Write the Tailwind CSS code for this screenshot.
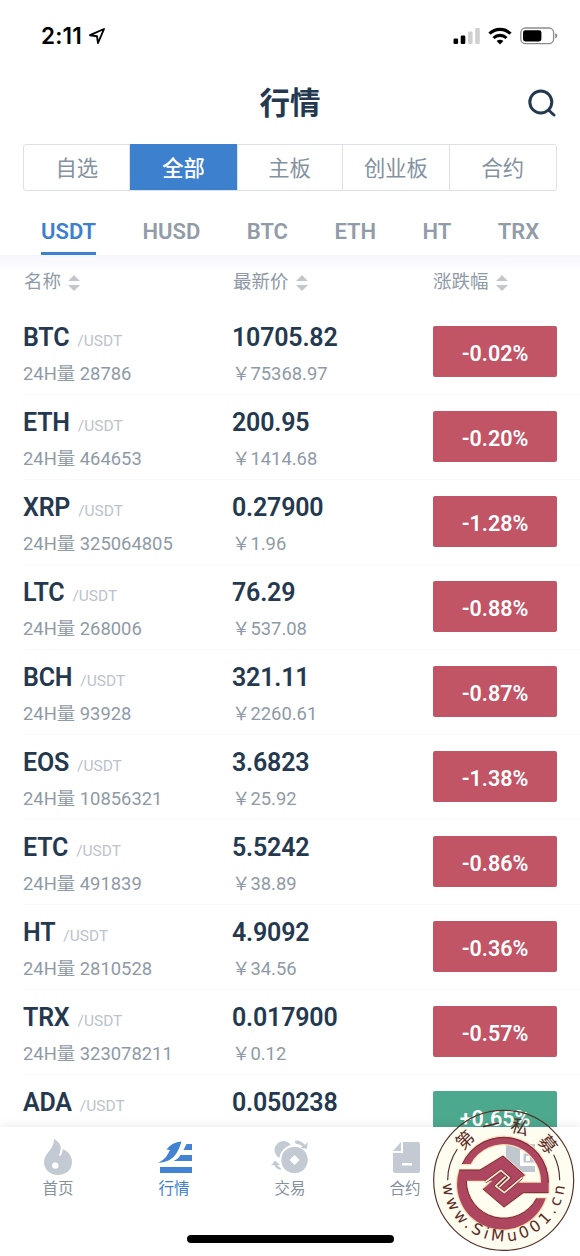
<!DOCTYPE html>
<html lang="zh-CN">
<head>
    <meta charset="UTF-8">
    <meta name="viewport" content="width=device-width, initial-scale=1.0">
    <title>行情</title>
    <script src="https://cdn.jsdelivr.net/npm/@tailwindcss/browser@4"></script>
</head>
<body class="bg-white font-['Roboto','Noto_Sans_CJK_SC',sans-serif]">
<div class="relative flex h-[1256px] w-[580px] flex-col overflow-hidden bg-white">
    <!-- status bar -->
    <div class="flex h-[70px] shrink-0 items-center pt-[2px] pr-[22px] pl-[41px]">
        <span class="font-['Inter',sans-serif] text-[22.5px] font-semibold tracking-[0.2px] text-black">2:11</span>
        <svg class="mt-[-1px] ml-[6px]" width="18" height="18" viewBox="0 0 18 18" fill="none" stroke="#000" stroke-width="1.9" stroke-linejoin="round"><path d="M2 8.2 16 2 10 16 9 9.2Z"/></svg>
        <div class="ml-auto flex items-center">
            <svg width="28" height="18" viewBox="0 0 28 18">
                <rect x="0.5" y="11.5" width="4.6" height="5.5" rx="1.3"/>
                <rect x="7.7" y="8.5" width="4.6" height="8.5" rx="1.3"/>
                <rect x="15" y="4.5" width="4.6" height="12.5" rx="1.3" fill="#d0d0d0"/>
                <rect x="22.2" y="1" width="4.6" height="16" rx="1.3" fill="#d0d0d0"/>
            </svg>
            <svg class="ml-[7px]" width="24" height="18" viewBox="0 0 24 18" fill="none" stroke="#000" stroke-width="3.1">
                <path d="M1.5 6.7a15 15 0 0 1 21 0M5.5 11a9.3 9.3 0 0 1 13 0"/>
                <path d="M8.6 14a4.9 4.9 0 0 1 6.8 0L12 17.4Z" fill="#000" stroke="none"/>
            </svg>
            <svg class="ml-[8px]" width="38" height="18" viewBox="0 0 38 18">
                <rect x="0.8" y="1" width="32.8" height="15.6" rx="4.6" fill="none" stroke="#8c8c8c" stroke-width="1.3"/>
                <rect x="3" y="3.2" width="18.4" height="11.2" rx="2.4"/>
                <path d="M35.2 6v5.6q2.2-1 2.2-2.8t-2.2-2.8" fill="#8c8c8c"/>
            </svg>
        </div>
    </div>

    <!-- title -->
    <div class="relative flex h-[74px] shrink-0 justify-center pt-[12px]">
        <h1 class="text-[30.5px] leading-[44px] font-bold text-[#24394f]">行情</h1>
        <svg class="absolute top-[18px] right-[22px]" width="30" height="30" viewBox="0 0 30 30" fill="none" stroke="#24394f" stroke-width="3" stroke-linecap="round"><circle cx="12.8" cy="14" r="11"/><path d="m21 22.5 5 4.5"/></svg>
    </div>

    <!-- board switch -->
    <div class="mx-[23px] grid h-[47px] shrink-0 grid-cols-5 grid-rows-[45px] divide-x divide-[#dde1e6] rounded-[3px] border border-[#dde1e6] text-center text-[21.3px] leading-[48px] text-[#84919f]">
        <span>自选</span>
        <span class="-mt-px -mr-px h-[46px] bg-[#3d80cd] leading-[50px] font-medium text-white">全部</span>
        <span>主板</span>
        <span>创业板</span>
        <span>合约</span>
    </div>

    <!-- quote currency -->
    <div class="flex h-[64px] shrink-0 gap-[46.4px] pl-[41px] text-[22px] leading-[81px] font-semibold text-[#919ca8]">
        <span class="border-b-[3px] border-[#3d80cd] text-[#3d80cd]">USDT</span>
        <span>HUSD</span>
        <span>BTC</span>
        <span>ETH</span>
        <span>HT</span>
        <span>TRX</span>
    </div>

    <!-- column heads -->
    <div class="flex h-[55px] shrink-0 bg-linear-to-b from-[#f5f5fc] to-white to-30% pl-[24px] text-[18.5px] leading-[55px] text-[#8f9aa7]">
        <div class="flex w-[209px] items-center">名称
            <svg class="ml-[7px]" width="12" height="16" viewBox="0 0 12 16" fill="#c3c8cd"><path d="M6 0 12 6H0ZM6 16 0 10h12Z"/></svg>
        </div>
        <div class="flex w-[200px] items-center">最新价
            <svg class="ml-[7px]" width="12" height="16" viewBox="0 0 12 16" fill="#c3c8cd"><path d="M6 0 12 6H0ZM6 16 0 10h12Z"/></svg>
        </div>
        <div class="flex items-center">涨跌幅
            <svg class="ml-[7px]" width="12" height="16" viewBox="0 0 12 16" fill="#c3c8cd"><path d="M6 0 12 6H0ZM6 16 0 10h12Z"/></svg>
        </div>
    </div>

    <div id="coin_list" class="min-h-0 flex-1 overflow-hidden"></div>

    <!-- bottom tabs -->
    <nav class="relative flex h-[129px] shrink-0 bg-white pt-[11px] text-center text-[15.5px] text-[#84919f] shadow-[0_-1px_9px_rgba(0,0,0,0.09)]">
        <div class="flex w-[116px] flex-col items-center">
            <svg width="40" height="40" viewBox="0 0 40 40" fill="#c3cad3"><path fill-rule="evenodd" d="M16 1C23 5 24 9 21.5 16C20.5 20 24.5 18 24.7 11C30 13 34 18 34 24C34 32 28 37 20 37C12 37 6 31.5 6 24C6 15 16 12 16 1ZM17.3 24.2a3.3 3.3 0 1 0 .01 0Z"/></svg>
            <span class="mt-[-1px] leading-[24px]">首页</span>
        </div>
        <div class="flex w-[116px] flex-col items-center text-[#3d80cd]">
            <svg width="40" height="40" viewBox="0 0 40 40" fill="#4283d3"><path d="M6 29h32v6H6ZM4 24.500C11 22 13.500 17 16 12L12.500 11.500Q18 4 27.500 3.500C24.500 13 20 25 4 24.500ZM32.500 6H38v6H29.500ZM26.500 17H38v6H19.500C23 21.500 25 19.500 26.500 17Z"/></svg>
            <span class="mt-[-1px] leading-[24px]">行情</span>
        </div>
        <div class="flex w-[116px] flex-col items-center">
            <svg width="40" height="40" viewBox="0 0 40 40" fill="#c3cad3">
                <circle cx="13.500" cy="12" r="9"/>
                <circle cx="24.500" cy="22" r="15.300" fill="#fff"/>
                <path fill-rule="evenodd" d="M24.500 8.700a13.300 13.300 0 1 0 .01 0ZM24.500 17l5 5-5 5-5-5Z"/>
                <path d="M25 2.500Q31 2 35 7L37.800 4 37 10.800 30.500 10 32.500 8.300Q29.500 5.500 25.500 5.800ZM10.500 32Q6 31 4.300 27L1 27.500 5 22.500 10 27 7.300 27.300Q9 29.300 11 30Z"/>
            </svg>
            <span class="mt-[-1px] leading-[24px]">交易</span>
        </div>
        <div class="flex w-[114px] flex-col items-center">
            <svg width="40" height="40" viewBox="0 0 40 40" fill="#c3cad3"><path fill-rule="evenodd" d="M18 4H33q2 0 2 2V33q0 2-2 2H10q-2 0-2-2V15H18ZM17 25v2.500H27V25ZM16 4V13H8Z"/></svg>
            <span class="mt-[-1px] leading-[24px]">合约</span>
        </div>
        <div class="flex w-[118px] flex-col items-center">
            <svg width="40" height="40" viewBox="0 0 40 40" fill="#a9b4c4"><path fill-rule="evenodd" d="M5 6H34V34H15C9 34 5 30 5 25ZM19 12V28H34V24.500H22.500V15.500H34V12ZM25 18h4v5h-4Z"/></svg>
        </div>
        <div class="absolute bottom-[13px] left-[187px] h-[8px] w-[207px] rounded-full bg-black"></div>
    </nav>

    <!-- round stamp over the corner -->
    <svg class="absolute top-[1109px] left-[432px]" width="143" height="143" viewBox="36 57 429 429">
        <defs>
            <path id="ring_text" d="M67 270A184 184 0 0 0 435 270"/>
            <mask id="disc">
                <rect x="36" y="57" width="429" height="429" fill="#fff"/>
                <path d="M252 160H348V250H252Z" fill="#444"/>
                <path d="M36 57H465V114H36Z" fill="#000"/>
            </mask>
        </defs>
        <circle cx="251" cy="271" r="210" fill="#fffdf0" mask="url(#disc)"/>
        <circle cx="251" cy="271" r="210" fill="none" stroke="#54312b" stroke-width="3.5"/>
        <path d="M83 271A168 168 0 0 1 112 177M419 271A168 168 0 0 0 401 194" fill="none" stroke="#54312b" stroke-width="3.5"/>
        <g fill="#ae4660" stroke="#f6dfb3" stroke-width="7" paint-order="stroke">
            <path d="M127 222A135 135 0 0 1 386 278V308H310L252 351 189 297 217 272H139A112 112 0 0 0 350 325H377A135 135 0 0 1 118 240H180L249 198 314 256 290 278H363A112 112 0 0 0 152 222Z"/>
        </g>
        <path d="M127 222A135 135 0 0 1 385 278M118 240H180L249 198 314 256M139 272A112 112 0 0 0 350 325M189 297 252 351 310 308H385" fill="none" stroke="#732a3d" stroke-width="3"/>
        <path d="M196 276 243 241 268 263 238 291M306 263 253 308 227 288 257 260" fill="none" stroke="#6d2638" stroke-width="9"/>
        <path d="M196 276 243 241 268 263 238 291M306 263 253 308 227 288 257 260" fill="none" stroke="#fbecc8" stroke-width="5"/>
        <g fill="#5b2a25" font-family="'Noto Sans CJK SC', sans-serif" font-size="54" text-anchor="middle">
            <text transform="translate(135 150) rotate(-44)" y="19">第</text>
            <text transform="translate(213 107) rotate(-13)" y="19">一</text>
            <text transform="translate(300 112) rotate(17)" y="19">私</text>
            <text transform="translate(383 163) rotate(51)" y="19">募</text>
        </g>
        <text fill="#5b2a25" font-family="'DejaVu Sans', sans-serif" font-size="47"><textPath href="#ring_text" startOffset="12" textLength="548">www.SiMu001.cn</textPath></text>
    </svg>
</div>

<script>
    const coins = [
        ['BTC', '28786', '10705.82', '75368.97', '-0.02%'],
        ['ETH', '464653', '200.95', '1414.68', '-0.20%'],
        ['XRP', '325064805', '0.27900', '1.96', '-1.28%'],
        ['LTC', '268006', '76.29', '537.08', '-0.88%'],
        ['BCH', '93928', '321.11', '2260.61', '-0.87%'],
        ['EOS', '10856321', '3.6823', '25.92', '-1.38%'],
        ['ETC', '491839', '5.5242', '38.89', '-0.86%'],
        ['HT', '2810528', '4.9092', '34.56', '-0.36%'],
        ['TRX', '323078211', '0.017900', '0.12', '-0.57%'],
        ['ADA', '', '0.050238', '', '+0.65%']
    ];

    document.getElementById('coin_list').innerHTML = coins.map(([name, volume, price, cny, change]) => `
        <div class="ml-[23px] flex h-[85px] border-b border-[#f8f9fa]">
            <div class="w-[209px] pt-[10px]">
                <div class="flex h-[36px] items-baseline leading-[36px]">
                    <b class="text-[25px] font-semibold tracking-[-0.2px] text-[#24394f]">${name}</b>
                    <span class="ml-[8px] text-[15.5px] text-[#bcc3ca]">/USDT</span>
                </div>
                <div class="text-[18.4px] leading-[35px] text-[#8f9aa7]">${volume ? '24H量 ' + volume : ''}</div>
            </div>
            <div class="w-[201px] pt-[10px]">
                <div class="text-[25px] leading-[36px] font-semibold tracking-[-0.2px] text-[#24394f]">${price}</div>
                <div class="text-[18.4px] leading-[35px] text-[#8f9aa7]">${cny ? '&#xFFE5;' + cny : ''}</div>
            </div>
            <div class="mt-[16px] h-[51px] w-[124px] rounded-[2px] text-center text-[21.5px] leading-[55px] font-semibold text-white ${change[0] === '-' ? 'bg-[#c15465]' : 'bg-[#4ca98d]'}">${change}</div>
        </div>`).join('');
</script>
</body>
</html>
